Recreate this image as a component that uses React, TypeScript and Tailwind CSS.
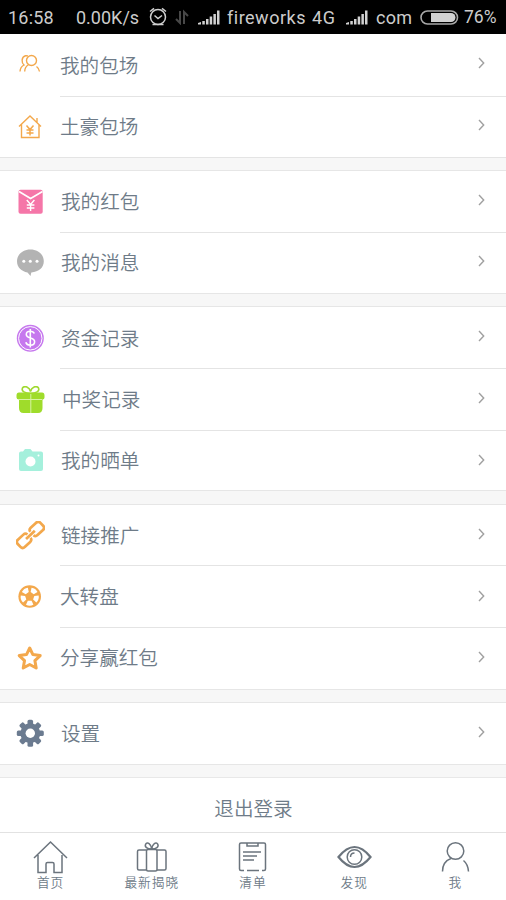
import type { ReactNode } from "react";

const cjk = "font-['Noto_Sans_CJK_SC_DemiLight','Noto_Sans_CJK_SC',sans-serif]";

function Signal() {
  return (
    <svg width="22" height="16" viewBox="0 0 22 16" fill="#d2d2d2">
      <path d="M0 15.500V14l3-1v2.500zM4.300 12h2.500v3.500H4.300zM8 10h2.500v5.500H8zM11.700 7.500h2.500v8h-2.500zM15.400 5h2.500v10.500h-2.500zM19 1.500h2.500v14H19z" />
    </svg>
  );
}

function StatusBar() {
  return (
    <header className="flex h-[34px] items-center bg-black font-[Roboto,sans-serif] text-[18px] font-normal text-[#cccccc]">
      <span className="ml-2 w-[68px] whitespace-nowrap tracking-[0.200px]">16:58</span>
      <span className="w-[71px] whitespace-nowrap">0.00K/s</span>
      <svg className="ml-0.5" width="18" height="20" viewBox="0 0 18 20" fill="none" stroke="#d0d0d0" strokeWidth="1.500">
        <circle cx="9" cy="10" r="7.500" />
        <path d="M1 4.500 5 1.300M17 4.500 13 1.300M5.500 8.500 9 11.500l4-3M3.500 17.500h11" />
      </svg>
      <svg className="ml-2" width="14" height="16" viewBox="0 0 14 16" fill="none" stroke="#484848" strokeWidth="2">
        <path d="M5 2v12L1 10M9 15V3l4 4" />
      </svg>
      <span className="ml-[9px]"><Signal /></span>
      <span className="ml-[7px] w-[85px] whitespace-nowrap tracking-[0.500px]">fireworks</span>
      <span className="w-[34px] pt-px tracking-[0.700px]">4G</span>
      <Signal />
      <span className="ml-2 w-[44px] tracking-[0.300px]">com</span>
      <svg width="39" height="15" viewBox="0 0 39 15">
        <rect x="1" y="1" width="36.500" height="13" rx="6.500" fill="none" stroke="#a8a8a8" strokeWidth="1.600" />
        <path d="M11 3h20a4.500 4.500 0 0 1 0 9H11z" fill="#d2d2d2" />
      </svg>
      <span className="ml-[5px] text-[17.500px]">76%</span>
    </header>
  );
}

function Chevron() {
  return (
    <svg width="8" height="12" viewBox="0 0 8 12" fill="none" stroke="#a0a0a0" strokeWidth="1.400">
      <path d="M1 1l4.700 5L1 11" />
    </svg>
  );
}

type RowProps = { icon: ReactNode; label: string; height: string; text?: string; chevron?: string; line?: string };

function Row({ icon, label, height, text = "pl-px pb-0.5", chevron = "pb-1", line = "border-b border-[#e4e4e4]" }: RowProps) {
  return (
    <a className={`flex ${height}`}>
      <span className="flex w-[60px] items-center pl-4">
        <svg width="29" height="29" viewBox="0 0 29 29">{icon}</svg>
      </span>
      <span className={`flex flex-1 items-center justify-between pr-5 ${line}`}>
        <span className={`text-[19.600px] leading-6 ${text}`}>{label}</span>
        <span className={chevron}><Chevron /></span>
      </span>
    </a>
  );
}

const orange = "#f3a84c";

const icons = {
  people: (
    <g fill="none" stroke={orange} strokeWidth="1.400">
      <circle cx="15.500" cy="9.500" r="5" />
      <path d="M4 20.500c.2-3 1.500-5.200 4-6.500C5.500 12 5 6 9.500 4.800c1-.2 1.600-.1 2.300.2M8.700 20.500c0-3.500 1.500-5.500 4-7M20.500 15.500c1.800 1.300 2.700 2.800 3 5" />
    </g>
  ),
  house: (
    <g fill="none" stroke={orange} strokeWidth="1.400">
      <path d="M3 13.500 14 3 25 13.500M5.500 11.500v13H23v-13M21 9.500V5" />
      <path d="m10.500 12.500 3.500 4 3.500-4M14 16.500v6M10.500 17h7M10.500 20h7" strokeWidth="1.500" />
    </g>
  ),
  envelope: (
    <g>
      <rect x="2.500" y="1.700" width="24.200" height="24" rx="2" fill="#f576a8" />
      <path d="m3 3.500 11.600 7L26.500 3.500" fill="none" stroke="#fff" strokeWidth="1.600" />
      <path d="m10.800 12 3.800 4.500 3.800-4.500M14.600 16.500V23M10.800 17h7.600M10.800 20h7.600" fill="none" stroke="#fff" strokeWidth="1.400" />
    </g>
  ),
  message: (
    <g>
      <path d="M14.300.5C7 .5 1 5.500 1 12.300c0 6 4.500 10.200 10.500 11.200l3 3.500.8-3.500C23 23 27.800 18.500 27.800 12.300 27.800 5.500 22 .5 14.300.5z" fill="#b3b3b3" />
      <g fill="#fff"><circle cx="7.800" cy="12.300" r="1.500" /><circle cx="14.300" cy="12.300" r="1.500" /><circle cx="21" cy="12.300" r="1.500" /></g>
    </g>
  ),
  coin: (
    <g fill="none">
      <circle cx="14.300" cy="14.300" r="13.500" fill="#c678ee" />
      <circle cx="14.300" cy="14.300" r="11.700" stroke="#fff" strokeWidth="1" />
      <path d="M18.300 9.500c-.8-1.700-2-2.200-4-2.200-2.400 0-4 1.200-4 3.200 0 4.600 8.300 2.600 8.300 7.300 0 2.200-1.800 3.400-4.200 3.400s-4-.8-4.600-3M14.300 5v18.500" stroke="#fff" strokeWidth="1.600" />
    </g>
  ),
  gift: (
    <g>
      <path d="M14.500 7.500C9 7 5 5.500 6.500 2 8.500-.8 13.500 1 14.500 5.500 15.500 1 20.500-.8 22.500 2 24 5.500 20 7 14.500 7.500z" fill="none" stroke="#9fd92f" strokeWidth="1.600" />
      <path d="M3 6.500h23q2.500 0 2.500 3v2q0 2-2 2V22q0 5-4.500 5H7.500Q3 27 3 22v-8.500q-2.500 0-2.500-2v-2q0-3 2.500-3z" fill="#9fdc2b" />
      <path d="M3 13.500h23M14.800 8v19" stroke="#d8f3a4" strokeWidth="1" />
    </g>
  ),
  camera: (
    <g>
      <path d="M5 5.500h2l2-2.500h5.500l2 2.500H25q2 0 2 2V23q0 2-2 2H5q-2 0-2-2V7.500q0-2 2-2z" fill="#a5f0dc" />
      <circle cx="14.500" cy="15.500" r="5" fill="#fff" />
      <circle cx="22.500" cy="9.500" r="1" fill="#fff" />
    </g>
  ),
  link: (
    <g transform="rotate(-43 14.300 14)" fill="none" stroke={orange} strokeWidth="2.700">
      <path d="M12.500 16.300q-.3 2.700-3 2.700H2q-3 0-3-3v-4q0-3 3-3h7.500q2.700 0 3 2.700M16.500 11.700q.3-2.700 3-2.700H27q3 0 3 3v4q0 3-3 3h-7.500q-2.700 0-3-2.700" />
      <path d="M8.500 14h12" />
    </g>
  ),
  wheel: (
    <g>
      <circle cx="13.700" cy="13.500" r="11.300" fill={orange} />
      <g fill="#fff">
        {[36, 108, 180, 252, 324].map((a) => (
          <path key={a} d="M10 5.300q3.700-2 7.400 0L15.600 9.300h-3.800z" transform={`rotate(${a} 13.700 13.500)`} />
        ))}
      </g>
    </g>
  ),
  star: (
    <path d="m13.700 4 3.200 6.600 7.300 1-5.300 5.100 1.300 7.300-6.500-3.500L7.200 24l1.300-7.300-5.300-5.100 7.300-1z" fill="none" stroke={orange} strokeWidth="3" strokeLinejoin="round" />
  ),
  gear: (
    <g fill="#6b7b90">
      {[0, 45, 90, 135].map((a) => (
        <rect key={a} x="11.500" y="0.800" width="5.600" height="27" rx="1.600" transform={`rotate(${a} 14.300 14.300)`} />
      ))}
      <circle cx="14.300" cy="14.300" r="10" />
      <circle cx="14.300" cy="14.300" r="4.700" fill="#fff" />
    </g>
  ),
};

const tabs: { label: string; icon: ReactNode }[] = [
  { label: "首页", icon: <path d="M1 18 17.500 2 34 18M5 15v17.500h8V24q0-1.500 1.500-1.500h5q1.500 0 1.500 1.500v8.500h8V15" /> },
  {
    label: "最新揭晓",
    icon: (
      <>
        <path d="M12.500 10H5q-1.500 0-1.500 1.500v17Q3.500 30 5 30h7.500M23 10h7.500q1.500 0 1.500 1.500v17q0 1.500-1.500 1.500H23" />
        <rect x="12.500" y="9.500" width="10.500" height="21.500" rx="1.500" />
        <path d="M17.700 9c-4.500 0-7.500-2-6-4.800s5.500-.5 6 4.800c.5-5.300 4.500-7.500 6-4.800S22.200 9 17.700 9z" />
      </>
    ),
  },
  {
    label: "清单",
    icon: <path d="M9 30.500H6q-1.500 0-1.500-1.500V4.500Q4.500 3 6 3h23q1.500 0 1.500 1.500V29q0 1.500-1.500 1.500h-2M12 30.500h12M12 3v3h11V3M8 12h18M8 16h14M8 20h11" />,
  },
  {
    label: "发现",
    icon: (
      <>
        <path d="M1.500 17Q17.500-3 33.500 17 17.500 37 1.500 17z" strokeWidth="2.200" />
        <circle cx="17.500" cy="17" r="7.300" />
        <path d="M13.500 17q0-4 4-4" />
      </>
    ),
  },
  { label: "我", icon: <><circle cx="17.500" cy="11" r="8.300" /><path d="M4.500 31.500c0-6 3-11 8.500-13M25.500 20.500c3 2.500 4.700 6 5 11" /></> },
];

const group = "border-y border-[#e6e6e6] bg-white";

export default function App() {
  return (
    <div className={`flex h-[900px] w-[506px] flex-col overflow-hidden bg-[#f7f7f7] font-[350] text-[#6e7b88] ${cjk}`}>
      <StatusBar />
      <section className="border-b border-[#e4e4e4] bg-white">
        <Row icon={icons.people} label="我的包场" height="h-[63px]" text="pl-0" />
        <Row icon={icons.house} label="土豪包场" height="h-[60px]" text="pl-0 pb-[3px]" line="" />
      </section>
      <section className={`mt-3 ${group}`}>
        <Row icon={icons.envelope} label="我的红包" height="h-[62px]" />
        <Row icon={icons.message} label="我的消息" height="h-[60px]" text="pl-px pb-[3px]" line="" />
      </section>
      <section className={`mt-3 ${group}`}>
        <Row icon={icons.coin} label="资金记录" height="h-[62px]" text="pl-px" />
        <Row icon={icons.gift} label="中奖记录" height="h-[62px]" text="pl-0.5 pb-0.5" chevron="pb-[3px]" />
        <Row icon={icons.camera} label="我的晒单" height="h-[59px]" text="pl-px pb-0.5" chevron="pb-px" line="" />
      </section>
      <section className={`mt-[13px] ${group}`}>
        <Row icon={icons.link} label="链接推广" height="h-[61px]" text="pl-px pb-px" chevron="pb-0.5" />
        <Row icon={icons.wheel} label="大转盘" height="h-[62px]" text="pl-0 pb-px" chevron="pb-px" />
        <Row icon={icons.star} label="分享赢红包" height="h-[61px]" text="pl-0 pb-[3px]" line="" />
      </section>
      <section className={`mt-3 ${group}`}>
        <Row icon={icons.gear} label="设置" height="h-[61px]" line="" />
      </section>
      <button className="mt-3 h-[55px] border-t border-[#e8e8e8] bg-white pt-[5px] pl-px text-[19.600px]">退出登录</button>
      <nav className="grid flex-1 grid-cols-5 border-t border-[#e2e2e2] bg-white">
        {tabs.map((t) => (
          <a key={t.label} className="flex flex-col items-center pt-[7px]">
            <svg width="35" height="35" viewBox="0 0 35 35" fill="none" stroke="#6b747d" strokeWidth="1.500">{t.icon}</svg>
            <span className="-mt-px text-[12.700px] leading-4 tracking-[1px]">{t.label}</span>
          </a>
        ))}
      </nav>
    </div>
  );
}
